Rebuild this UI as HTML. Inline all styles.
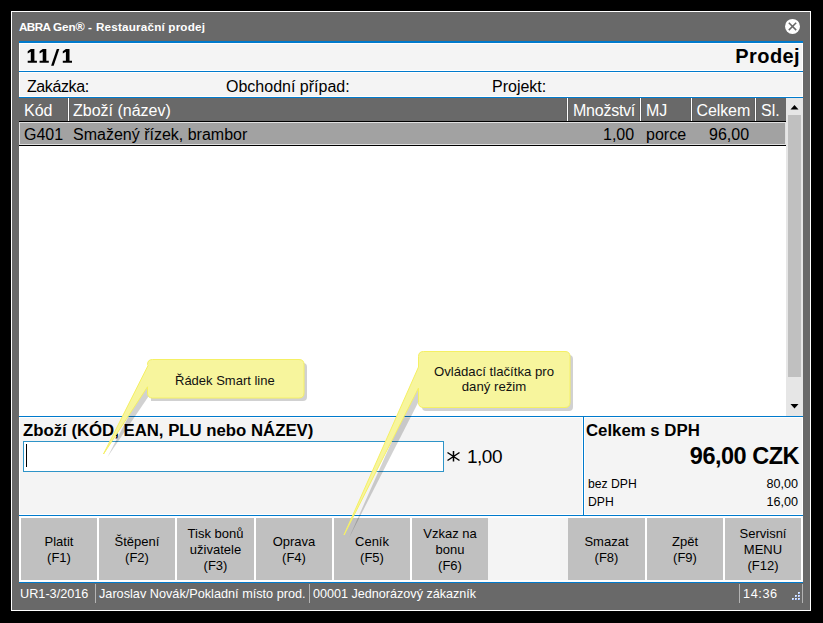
<!DOCTYPE html>
<html><head><meta charset="utf-8">
<style>
*{margin:0;padding:0;box-sizing:border-box}
html,body{width:823px;height:623px;overflow:hidden;background:#000}
body{position:relative;font-family:"Liberation Sans",sans-serif;color:#000}
.a{position:absolute}
.t{position:absolute;white-space:pre;line-height:1}
.w{color:#fff}
.b{font-weight:bold}
.dot{position:absolute;width:2px;height:2px;background:linear-gradient(135deg,#f4fbff 0%,#c8dcff 50%,#5a7cf0 100%)}
.btn{position:absolute;top:518px;height:62px;background:#c0c0c0;display:flex;align-items:center;justify-content:center;text-align:center;font-size:13px;line-height:16px;color:#000;padding-top:2px}
</style></head><body>
<!-- window -->
<div class="a" style="left:11px;top:11px;width:800px;height:600px;border:1px solid #fff;background:#696969"></div>
<div class="t w b" style="left:19px;top:21px;font-size:11.7px;letter-spacing:-0.6px">ABRA</div>
<div class="t w b" style="left:53px;top:21px;font-size:11.7px">Gen</div>
<div class="t w b" style="left:75.5px;top:20.5px;font-size:12.5px">®</div>
<div class="t w b" style="left:88px;top:21px;font-size:11.7px">-</div>
<div class="t w b" style="left:96px;top:21px;font-size:11.7px;letter-spacing:0.18px">Restaurační prodej</div>
<!-- close -->
<svg class="a" style="left:784px;top:18px" width="17" height="17" viewBox="0 0 17 17">
<circle cx="8.5" cy="8.4" r="7.5" fill="#fff"/>
<path d="M4.8 4.7 L12.2 12.1 M12.2 4.7 L4.8 12.1" stroke="#696969" stroke-width="1.5"/>
</svg>

<!-- content -->
<div class="a" style="left:19px;top:41px;width:784px;height:2px;background:#007acc"></div>
<div class="a" style="left:19px;top:43px;width:784px;height:28px;background:#f4f4f4;border:1px solid #fff"></div>
<div class="a" style="left:19px;top:71px;width:784px;height:1px;background:#007acc"></div>
<div class="a" style="left:19px;top:72px;width:784px;height:25px;background:#f4f4f4;border:1px solid #fff"></div>
<div class="a" style="left:19px;top:97px;width:784px;height:1px;background:#007acc"></div>

<svg class="a" style="left:0;top:0" width="80" height="70"><g fill="#000"><path d="M30.8 49 H34.4 V60.7 H36.9 V62.8 H27.7 V60.7 H30.8 V51.7 L27.7 53.4 V51.2 Z"/><path d="M42.7 49 H46.3 V60.7 H48.8 V62.8 H39.6 V60.7 H42.7 V51.7 L39.6 53.4 V51.2 Z"/><path d="M65.9 49 H69.5 V60.7 H72.0 V62.8 H62.8 V60.7 H65.9 V51.7 L62.8 53.4 V51.2 Z"/><path d="M56.8 49 H59.3 L53.7 65.8 H51.1 Z"/></g></svg>
<div class="t b" style="right:23px;top:46px;font-size:20px;letter-spacing:0.4px">Prodej</div>

<div class="t" style="left:27px;top:79px;font-size:16px;letter-spacing:-0.4px">Zakázka:</div>
<div class="t" style="left:226px;top:79px;font-size:16px">Obchodní případ:</div>
<div class="t" style="left:492px;top:79px;font-size:16px">Projekt:</div>

<!-- grid header -->
<div class="a" style="left:19px;top:98px;width:767px;height:23px;background:#696969"></div>
<div class="a" style="left:19px;top:121px;width:767px;height:1px;background:#000"></div>
<div class="a" style="left:67px;top:98px;width:3px;height:23px;background:#fff;border-left:1px solid #616161;border-right:1px solid #616161"></div>
<div class="a" style="left:566px;top:98px;width:3px;height:23px;background:#fff;border-left:1px solid #616161;border-right:1px solid #616161"></div>
<div class="a" style="left:639px;top:98px;width:3px;height:23px;background:#fff;border-left:1px solid #616161;border-right:1px solid #616161"></div>
<div class="a" style="left:690px;top:98px;width:3px;height:23px;background:#fff;border-left:1px solid #616161;border-right:1px solid #616161"></div>
<div class="a" style="left:754px;top:98px;width:3px;height:23px;background:#fff;border-left:1px solid #616161;border-right:1px solid #616161"></div>
<div class="t w" style="left:24px;top:103px;font-size:16px">Kód</div>
<div class="t w" style="left:73px;top:103px;font-size:16px">Zboží (název)</div>
<div class="t w" style="left:573px;top:103px;font-size:16px;letter-spacing:-0.25px">Množství</div>
<div class="t w" style="left:646px;top:103px;font-size:16px">MJ</div>
<div class="t w" style="left:696.5px;top:103px;font-size:16px;letter-spacing:-0.1px">Celkem</div>
<div class="t w" style="left:761px;top:103px;font-size:16px">Sl.</div>

<!-- data row -->
<div class="a" style="left:19px;top:122px;width:767px;height:23px;background:#a2a2a2;border:1px solid #e0e0e0"></div>
<div class="a" style="left:19px;top:145px;width:767px;height:1px;background:#000"></div>
<div class="a" style="left:19px;top:146px;width:767px;height:270px;background:#fff"></div>
<div class="t" style="left:24px;top:127px;font-size:16px">G401</div>
<div class="t" style="left:73px;top:127px;font-size:16px">Smažený řízek, brambor</div>
<div class="t" style="left:603px;top:127px;font-size:16px">1,00</div>
<div class="t" style="left:646px;top:127px;font-size:16px">porce</div>
<div class="t" style="left:709px;top:127px;font-size:16px">96,00</div>

<!-- scrollbar -->
<div class="a" style="left:786px;top:98px;width:17px;height:318px;background:#e6e6e6"></div>
<div class="a" style="left:788px;top:115px;width:13px;height:262px;background:#c0c0c0"></div>
<svg class="a" style="left:786px;top:98px" width="17" height="318">
<path d="M4.5 11.5 L8.5 7 L12.5 11.5 Z" fill="#000"/>
<path d="M4.5 306 L8.5 310.5 L12.5 306 Z" fill="#000"/>
</svg>

<!-- smart line section -->
<div class="a" style="left:19px;top:416px;width:784px;height:1px;background:#007acc"></div>
<div class="a" style="left:19px;top:417px;width:784px;height:98px;background:#f4f4f4;border:1px solid #fff"></div>
<div class="a" style="left:582px;top:417px;width:3px;height:98px;background:#fff;border-left:1px solid #fff;border-right:1px solid #fff"></div><div class="a" style="left:583px;top:416px;width:1px;height:99px;background:#007acc"></div>
<div class="t b" style="left:23px;top:423px;font-size:16.75px">Zboží (KÓD, EAN, PLU nebo NÁZEV)</div>
<div class="a" style="left:23px;top:441px;width:421px;height:31px;background:#fff;border:1px solid #2e94c8"></div>
<div class="a" style="left:26px;top:444px;width:1px;height:23px;background:#000"></div>
<svg class="a" style="left:446px;top:450px" width="15" height="13"><path d="M7.5 1 V11.5 M1.5 2.5 L13.5 10.5 M1.5 10.5 L13.5 2.5" stroke="#000" stroke-width="1.5"/></svg>
<div class="t" style="left:467px;top:447px;font-size:19px;letter-spacing:-0.5px">1,00</div>

<div class="t b" style="left:586px;top:423px;font-size:16.8px">Celkem s DPH</div>
<div class="t b" style="right:24px;top:444.5px;font-size:23.5px;letter-spacing:-0.5px">96,00 CZK</div>
<div class="t" style="left:588px;top:478px;font-size:12.2px">bez DPH</div>
<div class="t" style="right:25px;top:478px;font-size:12.6px">80,00</div>
<div class="t" style="left:588px;top:496px;font-size:12.2px">DPH</div>
<div class="t" style="right:25px;top:496px;font-size:12.6px">16,00</div>

<!-- buttons -->
<div class="a" style="left:19px;top:515px;width:784px;height:1px;background:#007acc"></div>
<div class="a" style="left:19px;top:516px;width:784px;height:66px;background:#fff"></div>
<div class="a" style="left:19px;top:582px;width:784px;height:1px;background:#007acc"></div>
<!-- button cells -->
<div class="btn" style="left:21px;width:76px"><div>Platit<br>(F1)</div></div>
<div class="btn" style="left:99px;width:76px"><div>Štěpení<br>(F2)</div></div>
<div class="btn" style="left:177px;width:77px"><div>Tisk bonů<br>uživatele<br>(F3)</div></div>
<div class="btn" style="left:256px;width:76px"><div>Oprava<br>(F4)</div></div>
<div class="btn" style="left:334px;width:76px"><div>Ceník<br>(F5)</div></div>
<div class="btn" style="left:412px;width:76px"><div>Vzkaz na<br>bonu<br>(F6)</div></div>
<div class="a" style="left:488px;top:518px;width:80px;height:62px;background:#f4f4f4"></div>
<div class="btn" style="left:568px;width:77px"><div>Smazat<br>(F8)</div></div>
<div class="btn" style="left:647px;width:76px"><div>Zpět<br>(F9)</div></div>
<div class="btn" style="left:725px;width:76px"><div>Servisní<br>MENU<br>(F12)</div></div>


<!-- status bar -->
<div class="t w" style="left:20px;top:588px;font-size:12.7px">UR1-3/2016</div>
<div class="a" style="left:95px;top:584px;width:1px;height:19px;background:#b4b4b4"></div>
<div class="t w" style="left:99px;top:588px;font-size:12.7px">Jaroslav Novák/Pokladní místo prod.</div>
<div class="a" style="left:309px;top:584px;width:1px;height:19px;background:#b4b4b4"></div>
<div class="t w" style="left:313px;top:588px;font-size:12.6px">00001 Jednorázový zákazník</div>
<div class="a" style="left:739px;top:584px;width:1px;height:19px;background:#b4b4b4"></div>
<div class="t w" style="left:743px;top:588px;font-size:12.7px;letter-spacing:0.6px">14:36</div>
<div class="a" style="left:802px;top:584px;width:1px;height:19px;background:#b4b4b4"></div>

<!-- grip -->
<div class="dot" style="left:798px;top:592px"></div>
<div class="dot" style="left:795px;top:595px"></div>
<div class="dot" style="left:798px;top:595px"></div>
<div class="dot" style="left:792px;top:598px"></div>
<div class="dot" style="left:795px;top:598px"></div>
<div class="dot" style="left:798px;top:598px"></div>

<!-- callouts -->
<svg class="a" style="left:0;top:0" width="823" height="623">
<g fill="rgba(0,0,0,0.18)">
<path d="M151 369 L151 401 Q151 401 155 401 L303 401 Q307 401 307 397 L307 367 Q307 363 303 363 L155 363 Q151 363 151 367 Z"/>
<path d="M151.5 372 L107.5 457 L151.5 392 Z"/>
<path d="M422 360 Q422 355 426 355 L569 355 Q573 355 573 359 L573 407 Q573 411 569 411 L426 411 Q422 411 422 407 Z"/>
<path d="M423 371 L349 538 L423 393 Z"/>
</g>
<g fill="#f7f59d" stroke="#f5f064" stroke-width="1">
<path d="M148 365.6 L147.5 364.5 Q147.5 359.5 152.5 359.5 L299 359.5 Q304 359.5 304 364.5 L304 393 Q304 398 299 398 L152.5 398 Q147.5 398 147.5 393 L147.5 386.8 L103.5 454 Z"/>
<path d="M418.5 367 L418.5 356.5 Q418.5 351.5 423.5 351.5 L565 351.5 Q570 351.5 570 356.5 L570 402.5 Q570 407.5 565 407.5 L423.5 407.5 Q418.5 407.5 418.5 402.5 L418.5 388 L344 535 Z"/>
</g>
</svg>
<div class="t" style="left:175px;top:374px;font-size:13px;color:#111">Řádek Smart line</div>
<div class="t" style="left:418px;top:364px;width:152px;text-align:center;font-size:13.2px;line-height:15px;color:#111">Ovládací tlačítka pro<br>daný režim</div>
</body></html>
